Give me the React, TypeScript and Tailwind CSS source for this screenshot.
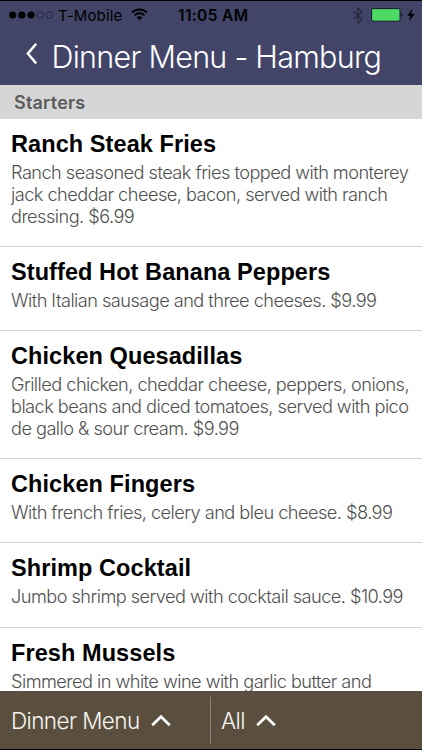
const items = [
  {
    name: "Ranch Steak Fries",
    lines: [
      "Ranch seasoned steak fries topped with monterey",
      "jack cheddar cheese, bacon, served with ranch",
      "dressing. $6.99",
    ],
  },
  {
    name: "Stuffed Hot Banana Peppers",
    lines: ["With Italian sausage and three cheeses. $9.99"],
  },
  {
    name: "Chicken Quesadillas",
    lines: [
      "Grilled chicken, cheddar cheese, peppers, onions,",
      "black beans and diced tomatoes, served with pico",
      "de gallo & sour cream. $9.99",
    ],
  },
  {
    name: "Chicken Fingers",
    lines: ["With french fries, celery and bleu cheese. $8.99"],
  },
  {
    name: "Shrimp Cocktail",
    lines: ["Jumbo shrimp served with cocktail sauce. $10.99"],
  },
  {
    name: "Fresh Mussels",
    lines: ["Simmered in white wine with garlic butter and"],
  },
];

const StatusBar = () => (
  <div className="grid h-[29px] grid-cols-[169px_86px_1fr] items-center border-t border-black pl-[9px] text-black">
    <div className="flex items-center">
      <svg width="45" height="10" viewBox="0 0 45 10">
        <g fill="#000">
          <circle cx="3.7" cy="5" r="3.6" />
          <circle cx="12.9" cy="5" r="3.6" />
          <circle cx="22" cy="5" r="3.6" />
        </g>
        <g fill="none" stroke="#15162a" strokeWidth="0.6">
          <circle cx="31.2" cy="5" r="3.3" />
          <circle cx="40.4" cy="5" r="3.3" />
        </g>
      </svg>
      <span className="ml-[4px] w-[73px] text-[15px] leading-none tracking-[0.15px] whitespace-nowrap">T-Mobile</span>
      <svg className="-mt-[2px]" width="17" height="13" viewBox="0 0 17 13" fill="none" stroke="#000" strokeWidth="1.9">
        <path d="M1 4.6a10.6 10.6 0 0 1 15 0" />
        <path d="M3.6 7.3a6.9 6.9 0 0 1 9.8 0" />
        <path d="M8.5 12.2 5.9 9.5a3.7 3.7 0 0 1 5.2 0z" fill="#000" stroke="none" />
      </svg>
    </div>
    <span className="pt-[2px] text-[15.5px] leading-none font-semibold tracking-[0.35px] whitespace-nowrap">11:05 AM</span>
    <div className="flex items-center justify-end pr-[7px]">
      <svg width="10" height="17" viewBox="0 0 10 17" fill="none" stroke="#27283f" strokeWidth="1.2">
        <path d="M.7 4.7 9 12.2 5 16V1l4 3.8-8.3 7.5" />
      </svg>
      <svg className="-mt-px ml-[8px]" width="33" height="14" viewBox="0 0 33 14">
        <rect x=".6" y=".6" width="28.4" height="12.6" rx="1.5" fill="#4cd964" stroke="#15172a" strokeWidth="1" />
        <path d="M30.3 4.5q2 2.4 0 4.8z" fill="#000" />
      </svg>
      <svg className="-mt-px ml-[3px]" width="8" height="12" viewBox="0 0 8 12">
        <path d="M5.2 0 .3 6.8h2.9L2.3 12l5.3-7H4.5z" fill="#000" />
      </svg>
    </div>
  </div>
);

const UpArrow = () => (
  <svg width="20" height="13" viewBox="0 0 20 13" fill="none" stroke="#fff" strokeWidth="2.7">
    <path d="M1.2 11.2 10 2.7l8.8 8.5" />
  </svg>
);

export default function App() {
  return (
    <div className="flex h-[750px] w-[422px] flex-col overflow-hidden bg-white font-['Inter','Liberation_Sans',sans-serif]">
      <header className="h-[85px] shrink-0 bg-[#424468]">
        <StatusBar />
        <div className="flex h-[56px] items-center pl-[26px] text-white">
          <svg className="-mt-[6px]" width="12" height="22" viewBox="0 0 12 22" fill="none" stroke="#fff" strokeWidth="2.4">
            <path d="M10.2.8 1.8 10.6l8.4 9.8" />
          </svg>
          <h1 className="mt-px ml-[13.5px] text-[30.5px] leading-none font-light tracking-[-0.74px] whitespace-nowrap">Dinner Menu - Hamburg</h1>
        </div>
      </header>
      <div className="flex h-[34.4px] shrink-0 items-center bg-[#d6d6d6] pt-px pl-[14px] text-[18px] font-semibold tracking-[0.2px] text-[#5b5b5b]">
        Starters
      </div>
      <main className="min-h-0 flex-1 overflow-hidden">
        {items.map((item) => (
          <section key={item.name} className="border-b border-[#d2d2d2] pt-[12px] pb-[18.8px] pl-[11px]">
            <h2 className="font-['Liberation_Sans',sans-serif] text-[23.5px] leading-[27px] font-bold tracking-[0.08px] whitespace-nowrap text-black">{item.name}</h2>
            <div className="pt-[4px] text-[18.2px] leading-[21.6px] font-light tracking-[-0.54px] text-[#505050]">
              {item.lines.map((line) => (
                <p key={line} className="whitespace-nowrap">{line}</p>
              ))}
            </div>
          </section>
        ))}
      </main>
      <footer className="flex h-[59px] shrink-0 items-center border-b border-black bg-[#5a4f3e] text-[22.5px] font-light tracking-[-0.6px] text-[#f7f5f2]">
        <div className="flex w-[210px] items-center pl-[11px]">
          <span className="w-[140px] pt-[2px] whitespace-nowrap">Dinner Menu</span>
          <UpArrow />
        </div>
        <div className="flex h-[47px] items-center border-l border-[#8b8478] pl-[10px]">
          <span className="w-[35px] pt-[2px]">All</span>
          <UpArrow />
        </div>
      </footer>
    </div>
  );
}
